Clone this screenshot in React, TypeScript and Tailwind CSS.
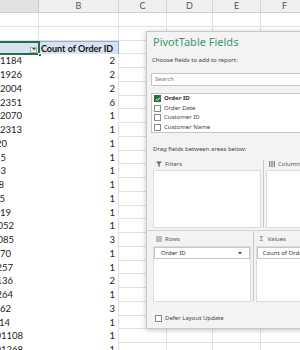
import React from 'react';

interface DataRow {
  id: string;
  clip: string;
  count: string;
}

const dataRows: DataRow[] = [
  { id: '101184', clip: 'w-[22px]', count: '2' },
  { id: '101926', clip: 'w-[22px]', count: '2' },
  { id: '142004', clip: 'w-[22px]', count: '2' },
  { id: '102351', clip: 'w-[22px]', count: '6' },
  { id: '102070', clip: 'w-[22px]', count: '1' },
  { id: '102313', clip: 'w-[22px]', count: '1' },
  { id: '1020', clip: 'w-[7px]', count: '1' },
  { id: '1015', clip: 'w-[6px]', count: '1' },
  { id: '1043', clip: 'w-[6px]', count: '1' },
  { id: '108', clip: 'w-[4px]', count: '1' },
  { id: '105', clip: 'w-[5px]', count: '1' },
  { id: '1019', clip: 'w-[11px]', count: '1' },
  { id: '10052', clip: 'w-[14px]', count: '1' },
  { id: '10085', clip: 'w-[14px]', count: '3' },
  { id: '1070', clip: 'w-[11px]', count: '1' },
  { id: '10257', clip: 'w-[13px]', count: '1' },
  { id: '10136', clip: 'w-[13px]', count: '2' },
  { id: '10264', clip: 'w-[13px]', count: '1' },
  { id: '1062', clip: 'w-[11px]', count: '3' },
  { id: '1014', clip: 'w-[10px]', count: '1' },
  { id: '101108', clip: 'w-[23px]', count: '1' },
  { id: '101268', clip: 'w-[23px]', count: '1' },
];

const fields = [
  { name: 'Order ID', checked: true },
  { name: 'Order Date', checked: false },
  { name: 'Customer ID', checked: false },
  { name: 'Customer Name', checked: false },
];

// empty cells C..F with gridlines
const EmptyCells: React.FC = () => (
  <>
    <div className="w-[48px] shrink-0 border-r border-b border-[#e1e1e1]" />
    <div className="w-[46px] shrink-0 border-r border-b border-[#e1e1e1]" />
    <div className="w-[48px] shrink-0 border-r border-b border-[#e1e1e1]" />
    <div className="w-[48px] shrink-0 border-r border-b border-[#e1e1e1]" />
    <div className="flex-1 border-b border-[#e1e1e1]" />
  </>
);

const Checkbox: React.FC<{ checked?: boolean }> = ({ checked }) =>
  checked ? (
    <div className="w-[7px] h-[7px] bg-[#217346] flex items-center justify-center">
      <svg width="6" height="6" viewBox="0 0 6 6">
        <path d="M1 3.2l1.3 1.3L5 1.6" stroke="white" strokeWidth="1" fill="none" />
      </svg>
    </div>
  ) : (
    <div className="w-[7px] h-[7px] bg-white border border-[#8a8a8a]" />
  );

const AreaHeader: React.FC<{ icon: React.ReactNode; label: string }> = ({ icon, label }) => (
  <div className="h-[8px] flex items-center pl-[3px] gap-[3px] text-[6px] leading-[8px] text-[#555]">
    <div className="w-[6px] flex justify-center">{icon}</div>
    <span>{label}</span>
  </div>
);

export default function App() {
  return (
    <div className="relative w-[300px] h-[350px] overflow-hidden bg-white font-['Lato',sans-serif] text-[#222]">
      {/* column headers */}
      <div className="flex h-[13px] bg-[#efefef] border-b border-[#cfcfcf] text-[9px] leading-[12px] text-[#555]">
        <div className="w-[39px] shrink-0 bg-[#e2e2e2] border-r border-[#c8c8c8]" />
        <div className="w-[80px] shrink-0 border-r border-[#d6d6d6] text-center">B</div>
        <div className="w-[48px] shrink-0 border-r border-[#d6d6d6] text-center">C</div>
        <div className="w-[46px] shrink-0 border-r border-[#d6d6d6] text-center">D</div>
        <div className="w-[48px] shrink-0 border-r border-[#d6d6d6] text-center">E</div>
        <div className="w-[48px] shrink-0 border-r border-[#d6d6d6] text-center">F</div>
        <div className="flex-1" />
      </div>

      {/* rows 1-2 */}
      {[0, 1].map((i) => (
        <div key={i} className="flex h-[13.75px]">
          <div className="w-[39px] shrink-0 border-r border-b border-[#e1e1e1]" />
          <div className="w-[80px] shrink-0 border-r border-b border-[#e1e1e1]" />
          <EmptyCells />
        </div>
      ))}

      {/* pivot header row */}
      <div className="flex h-[13.75px] text-[9px] leading-[13px]">
        <div className="relative w-[39px] shrink-0 bg-[#d9e1f2] border-t border-[#8ea9db]">
          <div className="absolute right-[2px] top-[5px] w-[7px] h-[6px] bg-[#f4f4f4] border border-[#b0b0b0] flex items-center justify-center">
            <svg width="4" height="3" viewBox="0 0 4 3">
              <path d="M0 0h4L2 2.5Z" fill="#555" />
            </svg>
          </div>
          <div className="absolute -left-[2px] -top-[1px] -right-[1px] -bottom-[1px] border-2 border-[#217346]" />
          <div className="absolute -right-[3px] -bottom-[3px] w-[4px] h-[4px] bg-[#217346] border border-white" />
        </div>
        <div className="w-[80px] shrink-0 bg-[#d9e1f2] border-t border-r border-[#8ea9db] pl-[2px] font-bold text-[#111] whitespace-nowrap overflow-hidden">
          Count of Order ID
        </div>
        <EmptyCells />
      </div>

      {/* data rows */}
      {dataRows.map((row, i) => (
        <div key={i} className="flex h-[13.75px] text-[9.5px] leading-[13px]">
          <div className="w-[39px] shrink-0">
            <div className={`${row.clip} overflow-hidden whitespace-nowrap flex justify-end`}>
              <span>{row.id}</span>
            </div>
          </div>
          <div className="w-[80px] shrink-0 border-r border-[#e1e1e1] text-right pr-[3px]">{row.count}</div>
          <EmptyCells />
        </div>
      ))}

      {/* PivotTable Fields pane */}
      <div className="absolute left-[146px] top-[31px] w-[170px] h-[298px] bg-[#f3f3f3] border border-[#c8c8c8] shadow-[0_1px_5px_rgba(0,0,0,0.25)] font-['Noto_Sans',sans-serif] text-[#444] flex flex-col">
        <div className="mt-[2px] pl-[6px] h-[16px] text-[11px] leading-[16px] text-[#3a9a6c] whitespace-nowrap">
          PivotTable Fields
        </div>
        <div className="mt-[6px] pl-[5px] h-[8px] text-[6px] leading-[8px] whitespace-nowrap">
          Choose fields to add to report:
        </div>
        <div className="mt-[9px] ml-[4px] h-[13px] bg-white border border-[#c6c6c6] pl-[3px] text-[6px] leading-[11px] text-[#777]">
          Search
        </div>
        <div className="mt-[7px] ml-[4px] h-[40px] bg-white border border-[#c6c6c6] flex flex-col justify-center">
          {fields.map((f) => (
            <div key={f.name} className="h-[10.25px] flex items-center pl-[2px] gap-[3px] text-[6px] whitespace-nowrap">
              <Checkbox checked={f.checked} />
              <span className={f.checked ? 'font-bold text-[#333]' : ''}>{f.name}</span>
            </div>
          ))}
        </div>
        <div className="mt-[12px] pl-[6px] h-[8px] text-[6px] leading-[8px] whitespace-nowrap">
          Drag fields between areas below:
        </div>

        {/* top areas */}
        <div className="mt-[7px] flex">
          <div className="ml-[6px] w-[108px] flex flex-col">
            <AreaHeader
              label="Filters"
              icon={
                <svg width="6" height="6" viewBox="0 0 6 6">
                  <path d="M0 0.5h6L3.7 3V6L2.3 5.2V3Z" fill="#666" />
                </svg>
              }
            />
            <div className="mt-[2px] h-[58px] bg-white border border-[#dcdcdc]" />
          </div>
          <div className="ml-[2px] w-px bg-[#c8c8c8]" />
          <div className="ml-[2px] flex-1 flex flex-col">
            <AreaHeader
              label="Columns"
              icon={
                <svg width="6" height="6" viewBox="0 0 6 6">
                  <path d="M0 0h1.4v6H0zM2.3 0h1.4v6H2.3zM4.6 0H6v6H4.6z" fill="#888" />
                </svg>
              }
            />
            <div className="mt-[2px] h-[58px] bg-white border border-[#dcdcdc]" />
          </div>
        </div>

        <div className="mt-[2px] h-px bg-[#d4d4d4]" />

        {/* bottom areas */}
        <div className="flex">
          <div className="ml-[6px] w-[108px] flex flex-col pt-[4px]">
            <AreaHeader
              label="Rows"
              icon={
                <svg width="6" height="6" viewBox="0 0 6 6">
                  <path d="M0 0.5h6v1H0zM0 2.5h6v1H0zM0 4.5h6v1H0z" fill="#888" />
                </svg>
              }
            />
            <div className="mt-[3px] h-[56px] bg-white border border-[#dcdcdc]">
              <div className="h-[12px] border border-[#c6c6c6] flex items-center justify-between pl-[6px] pr-[7px] text-[6px] text-[#333]">
                <span>Order ID</span>
                <svg width="4" height="3" viewBox="0 0 4 3">
                  <path d="M0 0h4L2 2.5Z" fill="#444" />
                </svg>
              </div>
            </div>
          </div>
          <div className="ml-[2px] w-px bg-[#c8c8c8]" />
          <div className="ml-[2px] flex-1 flex flex-col pt-[4px]">
            <AreaHeader label="Values" icon={<span className="text-[7px] leading-[8px] text-[#777]">Σ</span>} />
            <div className="mt-[3px] h-[56px] bg-white border border-[#dcdcdc]">
              <div className="h-[12px] border border-[#c6c6c6] flex items-center pl-[5px] text-[6px] text-[#333] whitespace-nowrap">
                Count of Order ID
              </div>
            </div>
          </div>
        </div>

        <div className="mt-[11px] ml-[8px] h-[10px] flex items-center gap-[3px] text-[6px] whitespace-nowrap">
          <Checkbox />
          <span>Defer Layout Update</span>
        </div>
      </div>
    </div>
  );
}
